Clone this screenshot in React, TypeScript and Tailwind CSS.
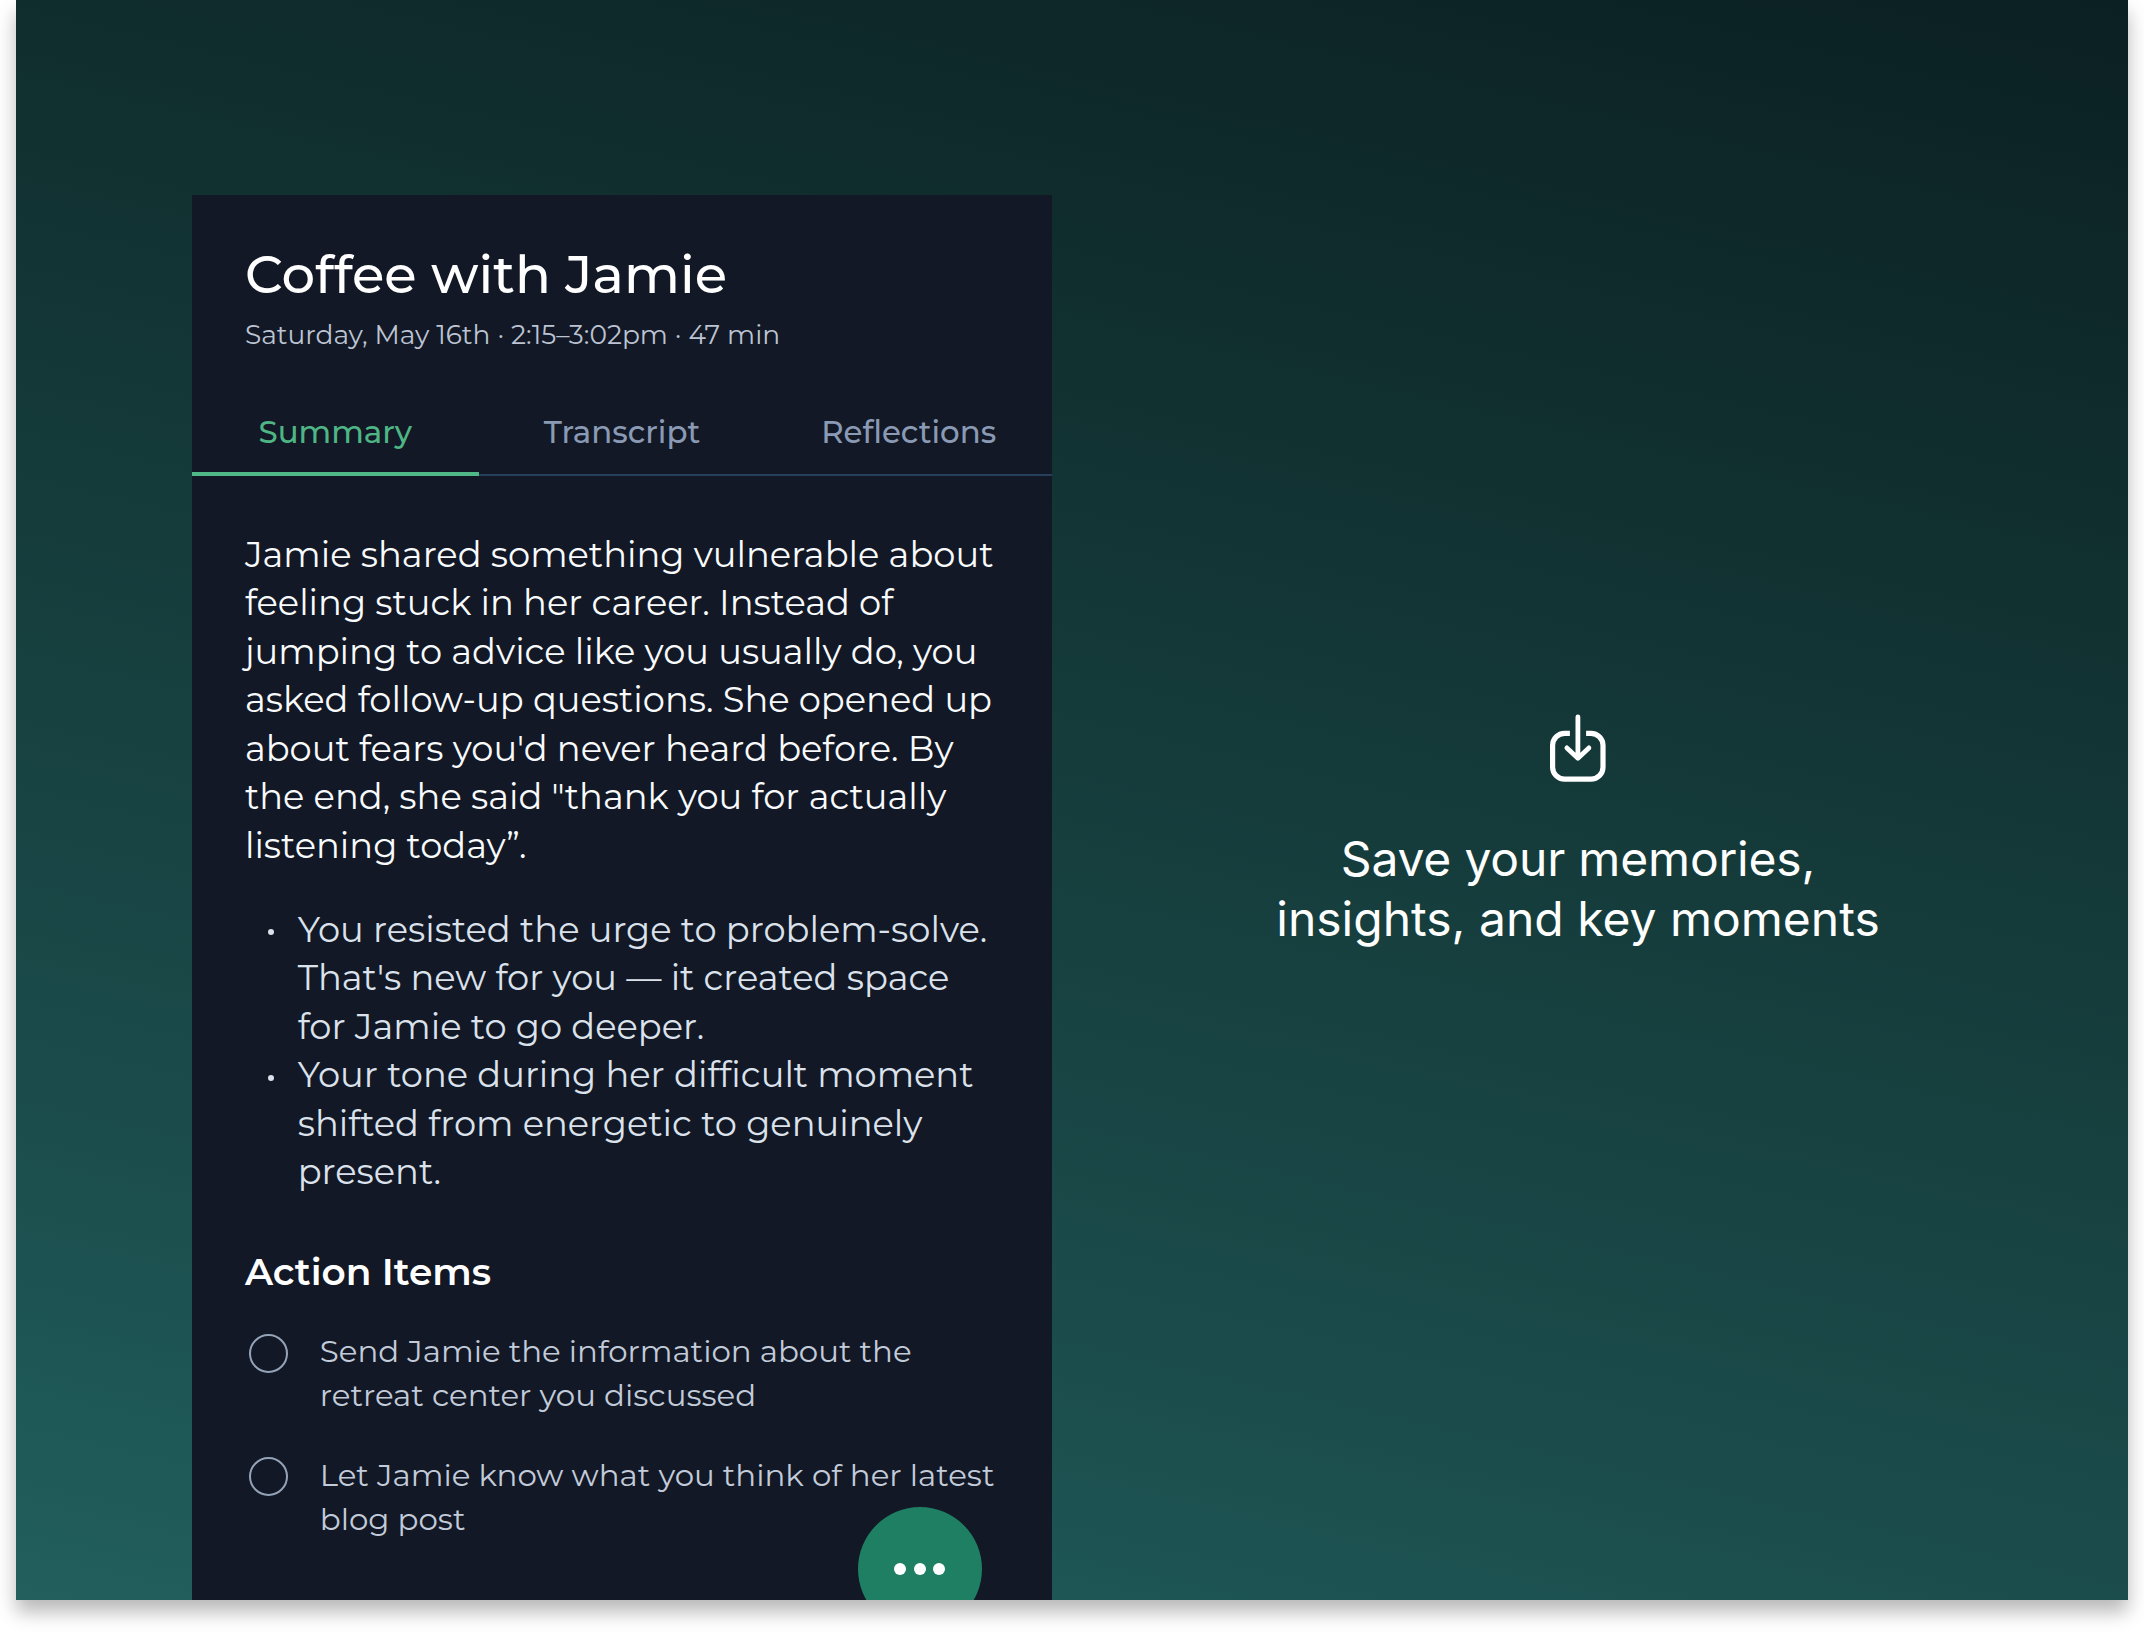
const tabs = ["Summary", "Transcript", "Reflections"];

const summary = [
  "Jamie shared something vulnerable about",
  "feeling stuck in her career. Instead of",
  "jumping to advice like you usually do, you",
  "asked follow-up questions. She opened up",
  "about fears you'd never heard before. By",
  'the end, she said "thank you for actually',
  "listening today”.",
];

const insights = [
  ["You resisted the urge to problem-solve.", "That's new for you — it created space", "for Jamie to go deeper."],
  ["Your tone during her difficult moment", "shifted from energetic to genuinely", "present."],
];

const actions = [
  ["Send Jamie the information about the", "retreat center you discussed"],
  ["Let Jamie know what you think of her latest", "blog post"],
];

function Lines({ lines }: { lines: string[] }) {
  return (
    <>
      {lines.map((line) => (
        <span key={line} className="block whitespace-nowrap">
          {line}
        </span>
      ))}
    </>
  );
}

function SaveIcon() {
  return (
    <svg width="60" height="72" viewBox="0 0 60 72" fill="none" stroke="#fff" className="block">
      <path
        d="M21.9 21.3H16.6a12 12 0 0 0-12 12V55.2a12 12 0 0 0 12 12H43a12 12 0 0 0 12-12V33.3a12 12 0 0 0-12-12H38.1"
        strokeWidth="5.2"
      />
      <path d="M29.9 5V46M18.9 35.9L29.9 46.2L40.9 35.9" strokeWidth="4.8" strokeLinecap="round" strokeLinejoin="round" />
    </svg>
  );
}

function SessionCard() {
  return (
    <section className="relative mt-[195px] ml-[176px] h-[1405px] w-[860px] shrink-0 bg-[#121825] pt-[49px] font-['Montserrat','Inter',sans-serif]">
      <header className="px-[52.9px]">
        <h1 className="text-[52.9px] leading-[60px] font-medium whitespace-nowrap text-white">Coffee with Jamie</h1>
        <p className="mt-[15px] text-[26.46px] leading-8 whitespace-nowrap text-[#bcc4d3]">
          Saturday, May 16th · 2:15–3:02pm · 47 min
        </p>
      </header>

      <nav className="mt-[59px] grid h-[66px] grid-cols-3 text-center text-[30.87px] leading-[44px] font-medium">
        {tabs.map((tab, i) => (
          <div
            key={tab}
            className={i === 0 ? "border-b-4 border-[#50b787] text-[#4eb585]" : "border-b-2 border-[#263f5b] text-[#8a9ab4]"}
          >
            {tab}
          </div>
        ))}
      </nav>

      <div className="px-[52.9px] pt-[54.9px] text-[35.28px] leading-[48.5px]">
        <p className="text-[#f8fafc]">
          <Lines lines={summary} />
        </p>
        <ul className="mt-[35.3px] text-[#dbe2ec]">
          {insights.map((item) => (
            <li key={item[0]} className="flex">
              <span className="mt-[23.4px] mr-[23.4px] ml-[23.4px] size-[6px] shrink-0 rounded-full bg-[#dbe2ec]" />
              <div>
                <Lines lines={item} />
              </div>
            </li>
          ))}
        </ul>
      </div>

      <div className="px-[52.9px] pt-[51.4px]">
        <h2 className="text-[37.5px] leading-[48px] font-semibold text-white">Action Items</h2>
        <ul className="mt-[33.2px] flex flex-col gap-[35.4px] text-[30.87px] leading-[44px] text-[#c2cbda]">
          {actions.map((item) => (
            <li key={item[0]} className="flex">
              <span className="mt-[4.5px] mr-[31.4px] ml-[4.5px] size-[39px] shrink-0 rounded-full border-2 border-[#94a3b8]" />
              <div>
                <Lines lines={item} />
              </div>
            </li>
          ))}
        </ul>
      </div>

      <button className="absolute top-[1312px] left-[666px] flex size-[123.5px] items-center justify-center gap-[7.3px] rounded-full bg-[#1e7f62]">
        <span className="size-3 rounded-full bg-white" />
        <span className="size-3 rounded-full bg-white" />
        <span className="size-3 rounded-full bg-white" />
      </button>
    </section>
  );
}

export default function App() {
  return (
    <div className="h-[1632px] w-[2144px] overflow-hidden bg-white px-4">
      <main className="h-[1600px] bg-linear-[193deg,#0b2023,#102d2d_23%,#1b4d4c_77%,#1d5655_88%,#225f5d] shadow-[0_12px_18px_rgba(0,0,0,0.28)]">
        <div className="flex h-full overflow-hidden">
          <SessionCard />
          <section className="flex w-[1052px] shrink-0 flex-col items-center pt-[712px]">
            <SaveIcon />
            <p className="mt-[45px] text-center font-['Inter',sans-serif] text-[48px] leading-[60px] text-white">
              <span className="tracking-[-0.18px]">Save your memories,</span>
              <br />
              insights, and key moments
            </p>
          </section>
        </div>
      </main>
    </div>
  );
}
